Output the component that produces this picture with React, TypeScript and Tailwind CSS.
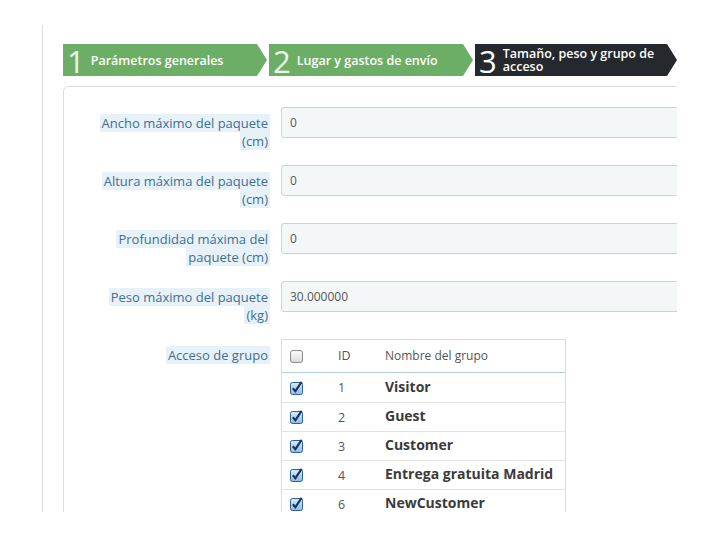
import React from "react"

interface Step {
    num: string
    label: React.ReactNode
    width: string
    active?: boolean
}

const steps: Step[] = [
    { num: "1", label: "Parámetros generales", width: "w-[204px]" },
    { num: "2", label: "Lugar y gastos de envío", width: "w-[204px]" },
    {
        num: "3",
        label: (
            <>
                Tamaño, peso y grupo de
                <br />
                acceso
            </>
        ),
        width: "w-[202px]",
        active: true,
    },
]

const fields = [
    { label: ["Ancho máximo del paquete", "(cm)"], value: "0" },
    { label: ["Altura máxima del paquete", "(cm)"], value: "0" },
    { label: ["Profundidad máxima del", "paquete (cm)"], value: "0" },
    { label: ["Peso máximo del paquete", "(kg)"], value: "30.000000" },
]

const groups = [
    { id: 1, name: "Visitor" },
    { id: 2, name: "Guest" },
    { id: 3, name: "Customer" },
    { id: 4, name: "Entrega gratuita Madrid" },
    { id: 6, name: "NewCustomer" },
]

const CheckBox = ({ checked }: { checked: boolean }) => {
    if (!checked)
        return (
            <svg width="13" height="13" viewBox="0 0 13 13">
                <defs>
                    <linearGradient id="cbEmpty" x1="0" y1="0" x2="0" y2="1">
                        <stop offset="0" stopColor="#ffffff" />
                        <stop offset="1" stopColor="#d9d9d9" />
                    </linearGradient>
                </defs>
                <rect x="0.5" y="0.5" width="12" height="12" rx="2.5" fill="url(#cbEmpty)" stroke="#8a8a8a" />
            </svg>
        )
    return (
        <svg width="13" height="14" viewBox="0 0 13 14">
            <defs>
                <linearGradient id="cbOn" x1="0" y1="0" x2="0" y2="1">
                    <stop offset="0" stopColor="#d8ecfb" />
                    <stop offset="1" stopColor="#8dbbe6" />
                </linearGradient>
            </defs>
            <rect x="0.5" y="1.5" width="12" height="12" rx="2" fill="url(#cbOn)" stroke="#2d5f93" />
            <path d="M2.8 7.2 L5.4 10.2 L11.6 0.8" fill="none" stroke="#1b3558" strokeWidth="2.1" />
        </svg>
    )
}

export default function App() {
    return (
        <div className="w-[720px] h-[540px] bg-white font-['Open_Sans',sans-serif] overflow-hidden">
            <div className="ml-[42px] mt-[25px] w-[635px] h-[487px] border-l border-[#dcdcdc] overflow-hidden">
                <div className="pl-[20px] pt-[19px]">
                    {/* Wizard steps */}
                    <div className="flex gap-[2px] h-[32px]">
                        {steps.map((s) => (
                            <div
                                key={s.num}
                                className={`${s.width} shrink-0 h-full flex items-center pl-[4px] [clip-path:polygon(0_0,calc(100%-10px)_0,100%_50%,calc(100%-10px)_100%,0_100%)] ${
                                    s.active ? "bg-[#25282c]" : "bg-[#6dae66]"
                                }`}
                            >
                                <span
                                    className={`text-[31px] leading-none font-normal mt-[3px] ${
                                        s.active ? "text-white" : "text-[#eaf5e8]"
                                    }`}
                                >
                                    {s.num}
                                </span>
                                <span className="ml-[6px] text-[12.5px] leading-[13px] font-semibold text-white">
                                    {s.label}
                                </span>
                            </div>
                        ))}
                    </div>

                    {/* Panel */}
                    <div className="mt-[10px] w-[700px] h-[500px] border border-[#d9dee0] rounded-tl-[5px] pt-[20px]">
                        {fields.map((f) => (
                            <div key={f.label[0]} className="flex h-[58px]">
                                <div className="w-[206px] text-right pt-[7px] text-[13px] leading-[18px] text-[#3f6f92]">
                                    <span className="bg-[#e7f2f8] px-[2px] [box-decoration-break:clone]">
                                        {f.label[0]}
                                        <br />
                                        {f.label[1]}
                                    </span>
                                </div>
                                <div className="ml-[11px] w-[420px] h-[31px] bg-[#f4f7f8] border border-[#c6d3d9] rounded-[3px] px-[8px] flex items-center text-[12px] text-[#555]">
                                    {f.value}
                                </div>
                            </div>
                        ))}

                        {/* Group access */}
                        <div className="flex">
                            <div className="w-[206px] text-right pt-[7px] text-[13px] leading-[18px] text-[#3f6f92]">
                                <span className="bg-[#e7f2f8] px-[2px]">Acceso de grupo</span>
                            </div>
                            <div className="ml-[11px] w-[285px] border border-[#dcdcdc] text-[12.5px] text-[#555]">
                                <div className="flex items-center h-[33px] border-b border-[#b9cdd8]">
                                    <div className="w-[56px] pl-[8px] flex">
                                        <CheckBox checked={false} />
                                    </div>
                                    <div className="w-[47px]">ID</div>
                                    <div className="text-[12px]">Nombre del grupo</div>
                                </div>
                                {groups.map((g, i) => (
                                    <div
                                        key={g.id}
                                        className={`flex items-center h-[29px] ${i > 0 ? "border-t border-[#e3e3e3]" : ""}`}
                                    >
                                        <div className="w-[56px] pl-[8px] flex">
                                            <CheckBox checked />
                                        </div>
                                        <div className="w-[47px] mt-[2px]">{g.id}</div>
                                        <div className="font-bold text-[14px] text-[#3b3b3b] -mt-[3px]">{g.name}</div>
                                    </div>
                                ))}
                            </div>
                        </div>
                    </div>
                </div>
            </div>
        </div>
    )
}
